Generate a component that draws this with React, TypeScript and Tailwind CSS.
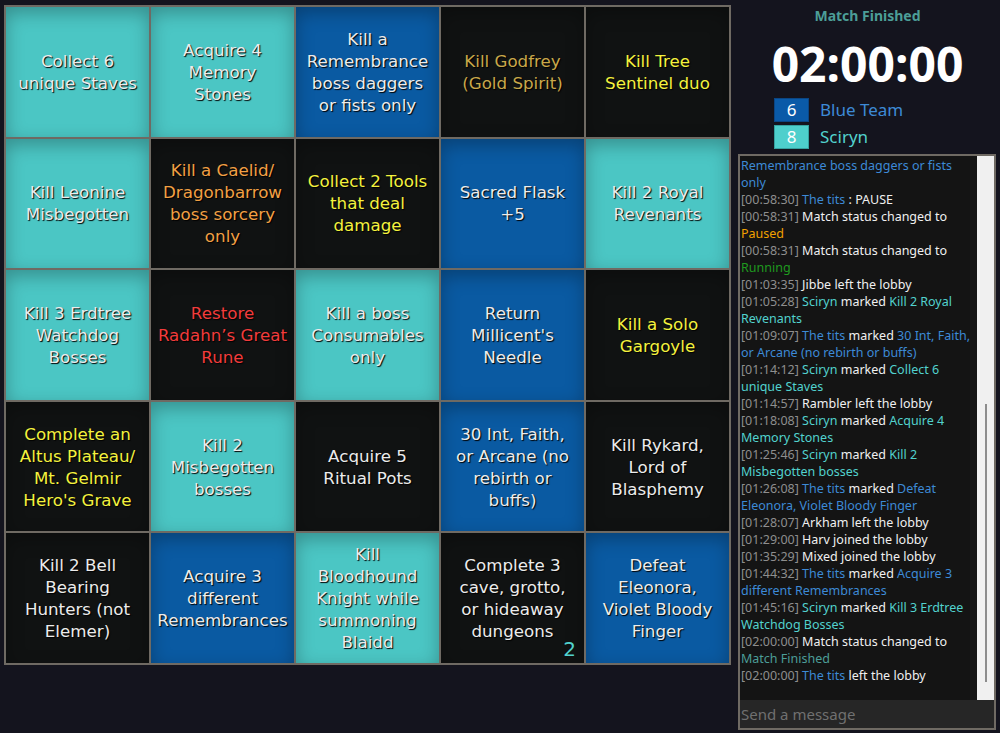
import React from 'react';

type Kind = 'teal' | 'blue' | 'black';

interface Goal {
  lines: string[];
  kind: Kind;
  color?: string;
  badge?: string;
}

const bg: Record<Kind, string> = {
  teal: 'bg-[#4bc6c4]',
  blue: 'bg-[#0a5aa2]',
  black: 'bg-[#101212]',
};

const goals: Goal[] = [
  { lines: ['Collect 6', 'unique Staves'], kind: 'teal' },
  { lines: ['Acquire 4', 'Memory', 'Stones'], kind: 'teal' },
  { lines: ['Kill a', 'Remembrance', 'boss daggers', 'or fists only'], kind: 'blue' },
  { lines: ['Kill Godfrey', '(Gold Spirit)'], kind: 'black', color: 'text-[#c9a84a]' },
  { lines: ['Kill Tree', 'Sentinel duo'], kind: 'black', color: 'text-[#f4f23e]' },

  { lines: ['Kill Leonine', 'Misbegotten'], kind: 'teal' },
  { lines: ['Kill a Caelid/', 'Dragonbarrow', 'boss sorcery', 'only'], kind: 'black', color: 'text-[#f2a044]' },
  { lines: ['Collect 2 Tools', 'that deal', 'damage'], kind: 'black', color: 'text-[#f4f23e]' },
  { lines: ['Sacred Flask', '+5'], kind: 'blue' },
  { lines: ['Kill 2 Royal', 'Revenants'], kind: 'teal' },

  { lines: ['Kill 3 Erdtree', 'Watchdog', 'Bosses'], kind: 'teal' },
  { lines: ['Restore', 'Radahn’s Great', 'Rune'], kind: 'black', color: 'text-[#f23c3c]' },
  { lines: ['Kill a boss', 'Consumables', 'only'], kind: 'teal' },
  { lines: ['Return', "Millicent's", 'Needle'], kind: 'blue' },
  { lines: ['Kill a Solo', 'Gargoyle'], kind: 'black', color: 'text-[#f4f23e]' },

  { lines: ['Complete an', 'Altus Plateau/', 'Mt. Gelmir', "Hero's Grave"], kind: 'black', color: 'text-[#f4f23e]' },
  { lines: ['Kill 2', 'Misbegotten', 'bosses'], kind: 'teal' },
  { lines: ['Acquire 5', 'Ritual Pots'], kind: 'black' },
  { lines: ['30 Int, Faith,', 'or Arcane (no', 'rebirth or', 'buffs)'], kind: 'blue' },
  { lines: ['Kill Rykard,', 'Lord of', 'Blasphemy'], kind: 'black' },

  { lines: ['Kill 2 Bell', 'Bearing', 'Hunters (not', 'Elemer)'], kind: 'black' },
  { lines: ['Acquire 3', 'different', 'Remembrances'], kind: 'blue' },
  { lines: ['Kill', 'Bloodhound', 'Knight while', 'summoning', 'Blaidd'], kind: 'teal' },
  { lines: ['Complete 3', 'cave, grotto,', 'or hideaway', 'dungeons'], kind: 'black', badge: '2' },
  { lines: ['Defeat', 'Eleonora,', 'Violet Bloody', 'Finger'], kind: 'blue' },
];

// chat colours
const C = {
  ts: 'text-[#8e8e8e]',
  txt: 'text-[#f0f0f0]',
  blue: 'text-[#3d8ad6]',
  teal: 'text-[#52d2ce]',
  orange: 'text-[#f0a000]',
  green: 'text-[#1f9a1f]',
  done: 'text-[#4c9e98]',
};

type Seg = [string, string] | 'br';

const log: Seg[][] = [
  [[C.blue, 'Remembrance boss daggers or fists'], 'br', [C.blue, 'only']],
  [[C.ts, '[00:58:30] '], [C.blue, 'The tits'], [C.txt, ' : PAUSE']],
  [[C.ts, '[00:58:31] '], [C.txt, 'Match status changed to'], 'br', [C.orange, 'Paused']],
  [[C.ts, '[00:58:31] '], [C.txt, 'Match status changed to'], 'br', [C.green, 'Running']],
  [[C.ts, '[01:03:35] '], [C.txt, 'Jibbe left the lobby']],
  [[C.ts, '[01:05:28] '], [C.teal, 'Sciryn'], [C.txt, ' marked '], [C.teal, 'Kill 2 Royal'], 'br', [C.teal, 'Revenants']],
  [[C.ts, '[01:09:07] '], [C.blue, 'The tits'], [C.txt, ' marked '], [C.blue, '30 Int, Faith,'], 'br', [C.blue, 'or Arcane (no rebirth or buffs)']],
  [[C.ts, '[01:14:12] '], [C.teal, 'Sciryn'], [C.txt, ' marked '], [C.teal, 'Collect 6'], 'br', [C.teal, 'unique Staves']],
  [[C.ts, '[01:14:57] '], [C.txt, 'Rambler left the lobby']],
  [[C.ts, '[01:18:08] '], [C.teal, 'Sciryn'], [C.txt, ' marked '], [C.teal, 'Acquire 4'], 'br', [C.teal, 'Memory Stones']],
  [[C.ts, '[01:25:46] '], [C.teal, 'Sciryn'], [C.txt, ' marked '], [C.teal, 'Kill 2'], 'br', [C.teal, 'Misbegotten bosses']],
  [[C.ts, '[01:26:08] '], [C.blue, 'The tits'], [C.txt, ' marked '], [C.blue, 'Defeat'], 'br', [C.blue, 'Eleonora, Violet Bloody Finger']],
  [[C.ts, '[01:28:07] '], [C.txt, 'Arkham left the lobby']],
  [[C.ts, '[01:29:00] '], [C.txt, 'Harv joined the lobby']],
  [[C.ts, '[01:35:29] '], [C.txt, 'Mixed joined the lobby']],
  [[C.ts, '[01:44:32] '], [C.blue, 'The tits'], [C.txt, ' marked '], [C.blue, 'Acquire 3'], 'br', [C.blue, 'different Remembrances']],
  [[C.ts, '[01:45:16] '], [C.teal, 'Sciryn'], [C.txt, ' marked '], [C.teal, 'Kill 3 Erdtree'], 'br', [C.teal, 'Watchdog Bosses']],
  [[C.ts, '[02:00:00] '], [C.txt, 'Match status changed to'], 'br', [C.done, 'Match Finished']],
  [[C.ts, '[02:00:00] '], [C.blue, 'The tits'], [C.txt, ' left the lobby']],
];

const Cell: React.FC<{ goal: Goal }> = ({ goal }) => (
  <div
    className={`relative flex items-center justify-center px-[5px] text-center shadow-[inset_0_6px_18px_rgba(0,0,0,0.28)] ${bg[goal.kind]} ${goal.color ?? 'text-[#ececec]'}`}
  >
    <div className="text-[16.7px] leading-[22px] [text-shadow:1px_1px_1px_#000]">
      {goal.lines.map((l, i) => (
        <div key={i} className="whitespace-nowrap">{l}</div>
      ))}
    </div>
    {goal.badge && (
      <span className="absolute right-[8px] bottom-[2px] text-[20px] leading-[24px] text-[#52d2ce]">{goal.badge}</span>
    )}
  </div>
);

export default function App() {
  return (
    <div className="flex h-[733px] w-[1000px] bg-[#14141e] font-['DejaVu_Sans',sans-serif]">
      {/* board */}
      <div className="ml-[4px] mt-[5px] grid h-[660px] w-[727px] grid-cols-5 grid-rows-5 gap-[2px] bg-[#6f6a63] p-[2px]">
        {goals.map((g, i) => (
          <Cell key={i} goal={g} />
        ))}
      </div>

      {/* side */}
      <div className="ml-[4px] flex w-[265px] flex-col font-['Noto_Sans',sans-serif]">
        <div className="mt-[6px] text-center text-[14px] font-bold leading-[20px] text-[#4c9e98]">Match Finished</div>
        <div className="mt-[10px] text-center text-[48px] font-bold leading-[56px] text-white">02:00:00</div>
        <div className="mt-[6px] flex flex-col gap-[3px] pl-[39px]">
          <div className="flex items-center gap-[11px]">
            <div className="flex h-[24px] w-[35px] items-center justify-center border border-[#0b4684] bg-[#0a5aa8] text-[17px] text-white">6</div>
            <span className="text-[17px] leading-[22px] text-[#3d8ad6]">Blue Team</span>
          </div>
          <div className="flex items-center gap-[11px]">
            <div className="flex h-[24px] w-[35px] items-center justify-center border border-[#36a2a0] bg-[#4ecfcc] text-[17px] text-white">8</div>
            <span className="text-[17px] leading-[22px] text-[#52d2ce]">Sciryn</span>
          </div>
        </div>

        {/* chat */}
        <div className="ml-[3px] mt-[5px] flex h-[576px] w-[258px] flex-col border-2 border-[#6f6a63] bg-[#141414]">
          <div className="flex min-h-0 flex-1">
            <div className="flex-1 overflow-hidden pl-[1px] pt-[1px] text-[12.5px] leading-[17px]">
              {log.map((msg, i) => (
                <div key={i} className="whitespace-nowrap">
                  {msg.map((s, j) =>
                    s === 'br' ? <br key={j} /> : <span key={j} className={s[0]}>{s[1]}</span>
                  )}
                </div>
              ))}
            </div>
            <div className="flex w-[17px] flex-col bg-[#f0f0f0] pb-[18px] pl-[8px] pt-[248px]">
              <div className="w-[2px] flex-1 bg-[#8c8c8c]" />
            </div>
          </div>
          <div className="flex h-[28px] items-center bg-[#262626] pl-[1px] text-[15px] text-[#707070]">Send a message</div>
        </div>
      </div>
    </div>
  );
}
